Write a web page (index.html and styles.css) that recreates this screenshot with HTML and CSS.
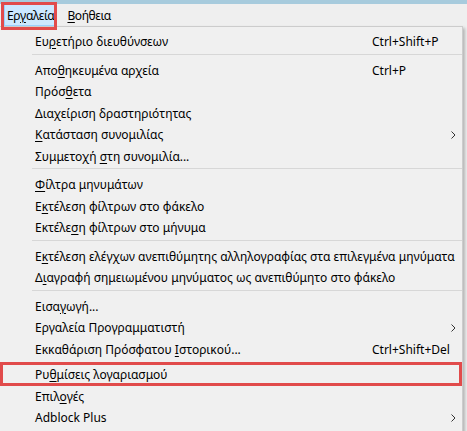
FILE: index.html
```html
<!DOCTYPE html>
<html lang="el">
  <head>
    <meta charset="utf-8" />
    <title>Εργαλεία</title>
    <link rel="stylesheet" href="styles.css">
  </head>
  <body>
    <div class="title-strip"></div>

    <div class="menubar">
      <div class="menubar-item active">Ερ<u>γ</u>αλεία</div>
      <div class="menubar-item"><u>Β</u>οήθεια</div>
    </div>

    <div class="popup">
      <div class="item"><span>Ευ<u>ρ</u>ετήριο διευθύνσεων</span><span class="key">Ctrl+Shift+P</span></div>
      <div class="sep"></div>
      <div class="item"><span>Απο<u>θ</u>ηκευμένα αρχεία</span><span class="key">Ctrl+P</span></div>
      <div class="item"><span>Πρόσ<u>θ</u>ετα</span></div>
      <div class="item"><span>Δια<u>χ</u>είριση δραστηριότητας</span></div>
      <div class="item"><span><u>Κ</u>ατάσταση συνομιλίας</span><span class="key"></span><span class="arrow"><svg width="5" height="8" viewBox="0 0 5 8"><polyline points="0.5,0.5 4,4 0.5,7.5" fill="none" stroke="#333" stroke-width="1"/></svg></span></div>
      <div class="item"><span>Συμμετοχή <u>σ</u>τη συνομιλία...</span></div>
      <div class="sep"></div>
      <div class="item"><span><u>Φ</u>ίλτρα μηνυμάτων</span></div>
      <div class="item"><span>Ε<u>κ</u>τέλεση φίλτρων στο φάκελο</span></div>
      <div class="item"><span>Εκτέλε<u>σ</u>η φίλτρων στο μήνυμα</span></div>
      <div class="sep"></div>
      <div class="item"><span>Ε<u>κ</u>τέλεση ελέγχων ανεπιθύμητης αλληλογραφίας στα επιλεγμένα μηνύματα</span></div>
      <div class="item"><span>Δ<u>ι</u>αγραφή σημειωμένου μηνύματος ως ανεπιθύμητο στο φάκελο</span></div>
      <div class="sep"></div>
      <div class="item"><span>Εισα<u>γ</u>ωγή...</span></div>
      <div class="item"><span>Εργαλεία Προγραμματιστή</span><span class="key"></span><span class="arrow"><svg width="5" height="8" viewBox="0 0 5 8"><polyline points="0.5,0.5 4,4 0.5,7.5" fill="none" stroke="#333" stroke-width="1"/></svg></span></div>
      <div class="item"><span>Εκκαθάριση Πρόσφατου <u>Ι</u>στορικού...</span><span class="key">Ctrl+Shift+Del</span></div>
      <div class="item spaced"><span>Ρυ<u>θ</u>μίσεις λογαριασμού</span></div>
      <div class="item"><span>Επιλ<u>ο</u>γές</span></div>
      <div class="item"><span>Adblock Plus</span><span class="key"></span><span class="arrow"><svg width="5" height="8" viewBox="0 0 5 8"><polyline points="0.5,0.5 4,4 0.5,7.5" fill="none" stroke="#333" stroke-width="1"/></svg></span></div>
    </div>

    <!-- red annotation boxes -->
    <div class="mark mark-menu"></div>
    <div class="mark mark-account"></div>
  </body>
</html>
```

FILE: styles.css
```css
body {
  margin: 0;
  background-color: #f0f0f0;
  font-family: "Noto Sans", "Segoe UI", sans-serif;
  font-size: 12px;
  color: #000;
  position: relative;
  overflow: hidden;
  height: 431px;
}

u {
  text-decoration-thickness: 1px;
  text-underline-offset: 2px;
}

.title-strip {
  height: 4px;
  background-color: #a7cbdd;
}

.menubar {
  display: flex;
  gap: 8px;
  height: 22px;
  padding-left: 4px;
  background-color: #efefef;
  letter-spacing: -0.4px;
}

.menubar-item {
  display: flex;
  align-items: center;
  padding: 0 1px 0 2px;
  border: 1px solid transparent;
}

.menubar-item.active {
  background-color: #cce8ff;
  border-color: #99d1ff;
}

.popup {
  width: 463px;
  box-sizing: border-box;
  border-top: 1px solid #cccccc;
  border-right: 1px solid #cccccc;
  padding: 4px 0 4px;
  background-color: #f0f0f0;
  box-shadow: 2px 2px 3px rgba(0, 0, 0, 0.25);
}

.item {
  display: grid;
  grid-template-columns: 337px 75px 1fr;
  align-items: center;
  height: 21.5px;
  padding-left: 35px;
  white-space: nowrap;
}

.item.spaced {
  margin-top: 4px;
}

.key {
  grid-column: 2;
}

.arrow {
  grid-column: 3;
  display: flex;
  justify-content: center;
  padding-right: 2px;
}

.sep {
  height: 1px;
  margin: 1px 0 5px 32px;
  background-color: #d7d7d7;
}

.mark {
  position: absolute;
  border: 3px solid #e14b4b;
  box-sizing: border-box;
}

.mark-menu {
  left: 1px;
  top: 2px;
  width: 56px;
  height: 28px;
}

.mark-account {
  left: 0;
  top: 362px;
  width: 462px;
  height: 24px;
}
```
